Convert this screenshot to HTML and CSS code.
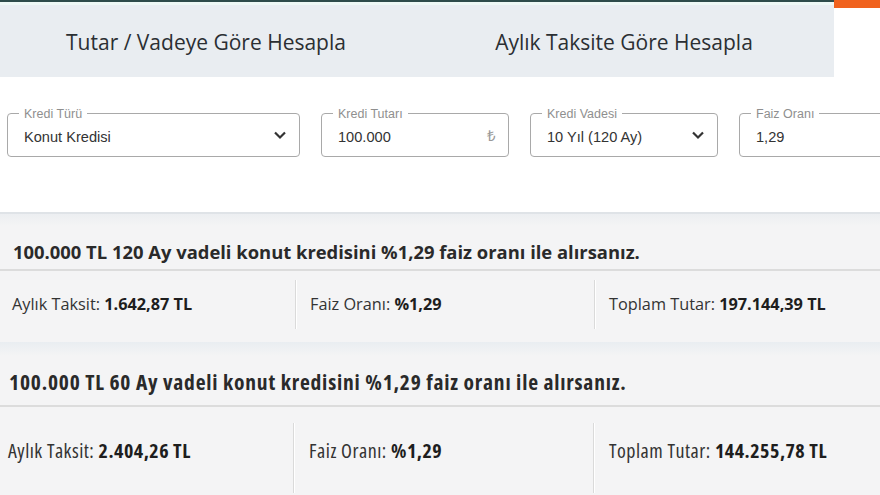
FILE: index.html
```html
<!DOCTYPE html>
<html lang="tr">
<head>
<meta charset="utf-8">
<link rel="stylesheet" href="styles.css">
</head>
<body>
<div class="page">
  <header class="header">
    <nav class="tabs">
      <div class="tab">Tutar / Vadeye Göre Hesapla</div>
      <div class="tab">Aylık Taksite Göre Hesapla</div>
    </nav>
    <div class="accent"></div>
  </header>

  <form class="form">
    <div class="field f1">
      <span class="label">Kredi Türü</span>
      <span class="value">Konut Kredisi</span>
      <svg class="chev" width="14" height="10" viewBox="0 0 14 10"><path d="M2 2.5 L7 7.5 L12 2.5" fill="none" stroke="#333" stroke-width="2.2"/></svg>
    </div>
    <div class="field f2">
      <span class="label">Kredi Tutarı</span>
      <span class="value">100.000</span>
      <span class="lira">₺</span>
    </div>
    <div class="field f2">
      <span class="label">Kredi Vadesi</span>
      <span class="value">10 Yıl (120 Ay)</span>
      <svg class="chev" width="14" height="10" viewBox="0 0 14 10"><path d="M2 2.5 L7 7.5 L12 2.5" fill="none" stroke="#333" stroke-width="2.2"/></svg>
    </div>
    <div class="field f4">
      <span class="label">Faiz Oranı</span>
      <span class="value">1,29</span>
    </div>
  </form>

  <section class="result r1">
    <h2 class="title">100.000 TL 120 Ay vadeli konut kredisini %1,29 faiz oranı ile alırsanız.</h2>
    <div class="cells">
      <div class="cell c1"><span>Aylık Taksit: <b>1.642,87 TL</b></span></div>
      <div class="cell c2"><span>Faiz Oranı: <b>%1,29</b></span></div>
      <div class="cell c3"><span>Toplam Tutar: <b>197.144,39 TL</b></span></div>
    </div>
  </section>

  <section class="result r2">
    <h2 class="title">100.000 TL 60 Ay vadeli konut kredisini %1,29 faiz oranı ile alırsanız.</h2>
    <div class="cells">
      <div class="cell c1"><span>Aylık Taksit: <b>2.404,26 TL</b></span></div>
      <div class="cell c2"><span>Faiz Oranı: <b>%1,29</b></span></div>
      <div class="cell c3"><span>Toplam Tutar: <b>144.255,78 TL</b></span></div>
    </div>
  </section>
</div>
</body>
</html>
```

FILE: styles.css
```css
* { box-sizing: border-box; }
html, body { margin: 0; padding: 0; }
body {
  width: 880px;
  height: 495px;
  overflow: hidden;
  background: #fff;
  font-family: "Open Sans", "Noto Sans", sans-serif;
  color: #222;
}
.page { width: 880px; overflow: hidden; }

.header { display: flex; height: 77px; }
.tabs {
  width: 834px;
  display: flex;
  background: #e9edf1;
  border-top: 2px solid #2e4b4a;
  box-shadow: inset 0 3px 0 #eef8f5;
}
.tab {
  flex: 1;
  display: flex;
  align-items: center;
  justify-content: center;
  font-size: 21px;
  color: #2b2f33;
  padding-top: 5px;
}
.tab:first-child { padding-right: 6px; }
.tab:last-child { padding-right: 4px; }
.accent {
  flex: 1;
  height: 8px;
  background: #f0621e;
}

.form {
  display: flex;
  gap: 21px;
  padding: 36px 0 0 7px;
  height: 135px;
  margin: 0;
}
.field {
  position: relative;
  height: 44px;
  border: 1px solid #a9a9a9;
  border-radius: 4px;
  display: flex;
  align-items: center;
  padding: 0 16px 0 16px;
  font-family: "Liberation Sans", Arial, sans-serif;
  flex: none;
}
.f1 { width: 293px; }
.f2 { width: 188px; }
.f4 { width: 200px; }
.label {
  position: absolute;
  top: -7px;
  left: 11px;
  background: #fff;
  padding: 0 5px;
  font-size: 12.5px;
  color: #8f8f8f;
  line-height: 14px;
}
.value {
  flex: 1;
  font-size: 14.6px;
  color: #333;
  padding-top: 3px;
}
.chev { flex: none; margin-right: -4px; }
.lira { font-size: 15px; color: #999; margin-right: -4px; }

.result {
  background: #f4f4f5;
}
.r1 {
  border-top: 2px solid #dfe3e7;
  background: linear-gradient(#eceef1, #f4f4f5 12px);
}
.r2 {
  background: linear-gradient(#e9edf1, #f4f4f5 14px);
}
.title {
  margin: 0;
  font-weight: 700;
  color: #2a2a2a;
  border-bottom: 2px solid #dcdcdc;
}
.r1 .title {
  font-size: 18.4px;
  padding: 26px 0 5px 13px;
  line-height: 24px;
}
.r2 .title {
  font-size: 21.5px;
  font-stretch: condensed;
  letter-spacing: 0.8px;
  padding: 26px 0 9px 9px;
  line-height: 28px;
}
.cells {
  display: flex;
}
.cell {
  display: flex;
  align-items: center;
  color: #333;
}
.cell b { font-weight: 700; color: #1e1e1e; }
.r1 .cells { height: 71px; }
.r1 .cell { font-size: 16.3px; padding-left: 12px; padding-bottom: 5px; }
.r1 .c1 { width: 295px; }
.r1 .c2 { width: 299px; padding-left: 15px; }
.r1 .c3 { flex: 1; padding-left: 15px; }
.r2 .cells { height: 92px; }
.r2 .cell { font-size: 20px; font-stretch: condensed; letter-spacing: 0.5px; padding-left: 8px; padding-bottom: 6px; }
.r2 .c1 { width: 293px; }
.r2 .c2 { width: 300px; padding-left: 16px; }
.r2 .c3 { flex: 1; padding-left: 16px; }
.c2, .c3 {
  position: relative;
}
.c2::before, .c3::before {
  content: "";
  position: absolute;
  left: 0;
  top: 9px;
  bottom: 13px;
  width: 1px;
  background: #dadada;
  box-shadow: 1px 0 0 #fff;
}
.r2 .c2::before, .r2 .c3::before { top: 16px; bottom: 6px; }
```
